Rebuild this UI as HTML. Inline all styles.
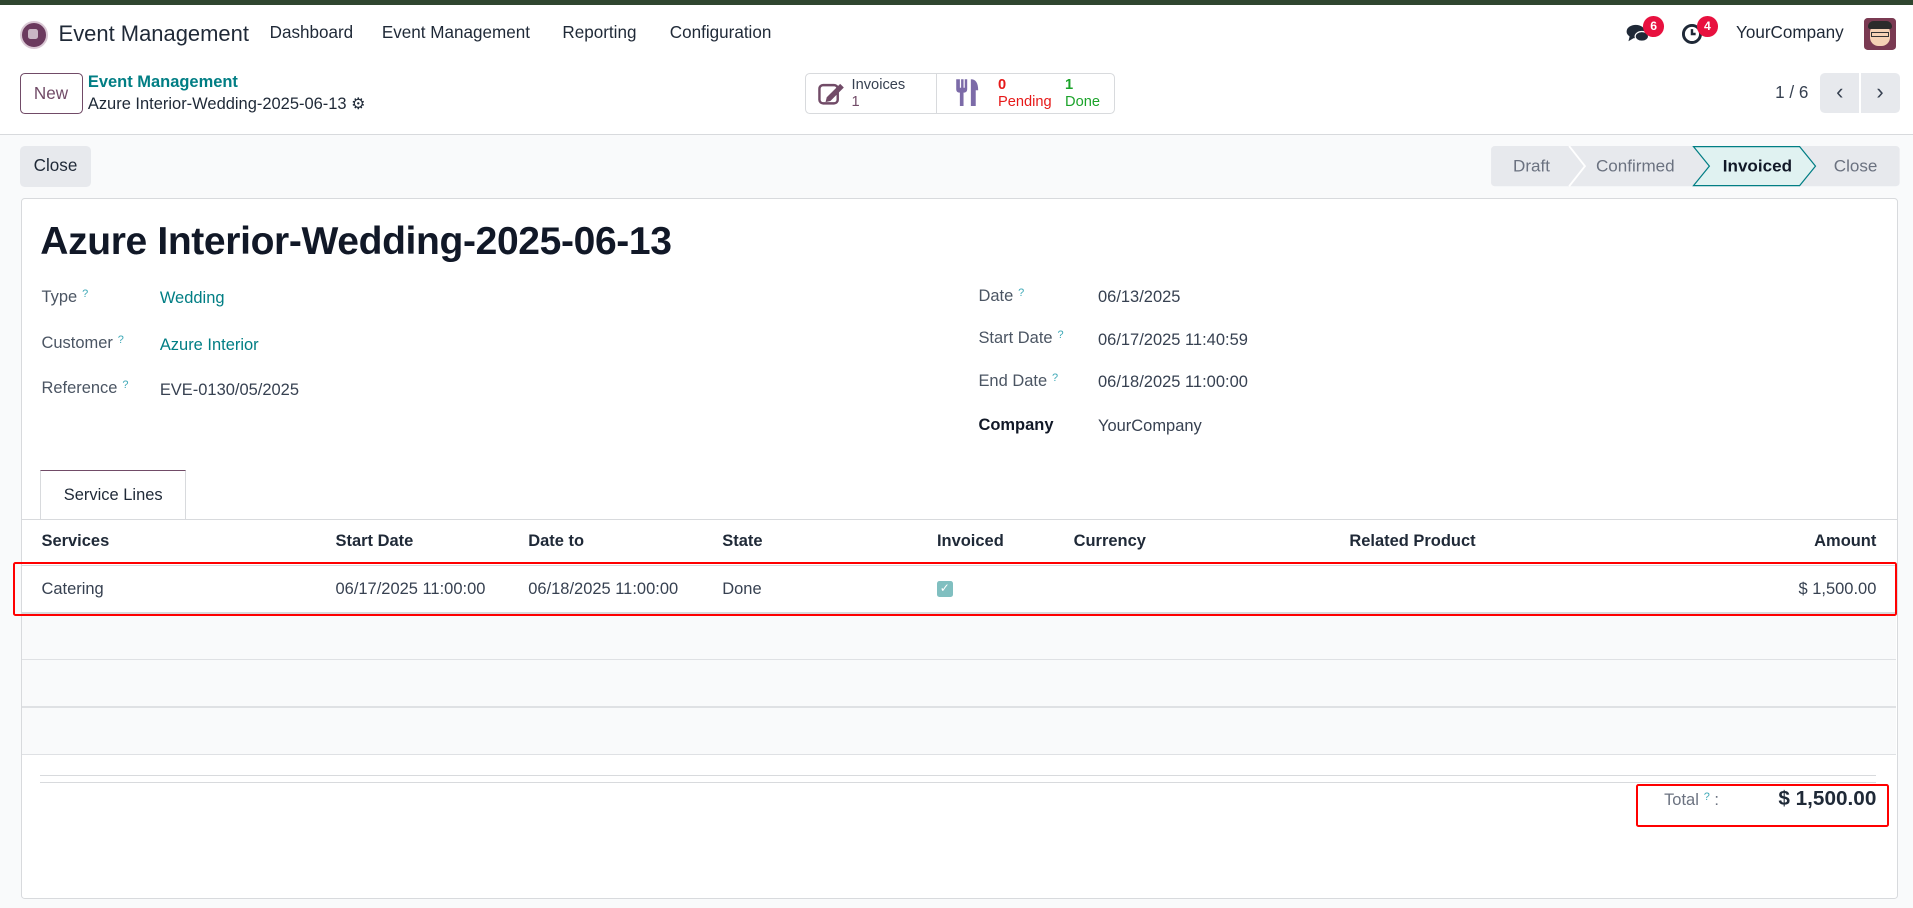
<!DOCTYPE html>
<html><head><meta charset="utf-8"><style>
html,body{margin:0;padding:0;width:1913px;height:908px;overflow:hidden;background:#f9fafb}
#w{zoom:1.22;width:1568px;height:744px;position:relative;font-family:"Liberation Sans",sans-serif;color:#374151;font-size:13px}
.a{position:absolute;white-space:nowrap}
.q{color:#3fa9b7;font-size:9px;vertical-align:top;margin-left:4px}
.lbl{color:#4b5563;font-size:13.5px}
.val{font-size:13.5px;color:#374151}
.teal{color:#017e84}
.th{font-weight:bold;color:#1f2937;font-size:13.5px}
</style></head><body><div id="w">
<div class="a" style="left:0;top:0;width:1568px;height:4px;background:#2f462f"></div>
<div class="a" style="left:0;top:4px;width:1568px;height:106px;background:#fff;border-bottom:1px solid #d8dadd"></div>
<!-- navbar -->
<div class="a" style="left:16px;top:17px;width:20px;height:20px;border-radius:50%;background:#6b3a5e;border:2px solid #d9c8d4"></div>
<div class="a" style="left:23px;top:24px;width:8px;height:8px;border-radius:2px;background:#c9b6c4"></div>
<div class="a" style="left:48px;top:17px;font-size:18px;color:#1f2937">Event Management</div>
<div class="a" style="left:221px;top:19px;font-size:14px;color:#1f2937">Dashboard</div>
<div class="a" style="left:313px;top:19px;font-size:14px;color:#1f2937">Event Management</div>
<div class="a" style="left:461px;top:19px;font-size:14px;color:#1f2937">Reporting</div>
<div class="a" style="left:549px;top:19px;font-size:14px;color:#1f2937">Configuration</div>
<svg class="a" style="left:1333px;top:19px" width="20" height="18" viewBox="0 0 20 18"><ellipse cx="8" cy="7" rx="7.5" ry="5.5" fill="#1f2937"/><path d="M3 11 L2 15 L7 12Z" fill="#1f2937"/><ellipse cx="13" cy="11" rx="5.5" ry="4" fill="#1f2937" stroke="#fff" stroke-width="1"/></svg>
<div class="a" style="left:1347px;top:13px;width:17px;height:17px;border-radius:50%;background:#e8113f;color:#fff;font-size:10px;font-weight:bold;text-align:center;line-height:17px">6</div>
<svg class="a" style="left:1378px;top:19px" width="18" height="18" viewBox="0 0 18 18"><circle cx="9" cy="9" r="7" fill="none" stroke="#1f2937" stroke-width="2.4"/><path d="M9 5v4h3" stroke="#1f2937" stroke-width="2" fill="none"/></svg>
<div class="a" style="left:1391px;top:13px;width:17px;height:17px;border-radius:50%;background:#e8113f;color:#fff;font-size:10px;font-weight:bold;text-align:center;line-height:17px">4</div>
<div class="a" style="left:1423px;top:19px;font-size:14px;color:#1f2937">YourCompany</div>
<div class="a" style="left:1528px;top:15px;width:26px;height:26px;border-radius:3px;background:#7a3a52;overflow:hidden"><div style="position:absolute;left:5px;top:5px;width:16px;height:18px;border-radius:7px;background:#f5d2b5"></div><div style="position:absolute;left:3px;top:2px;width:20px;height:7px;border-radius:5px 5px 2px 2px;background:#2b2b2b"></div><div style="position:absolute;left:6px;top:11px;width:14px;height:4px;border:1px solid #333;box-sizing:border-box"></div></div>
<!-- control panel -->
<div class="a" style="left:16px;top:60px;width:50px;height:32px;border:1px solid #714b67;border-radius:4px;color:#714b67;font-size:14px;text-align:center;line-height:32px">New</div>
<div class="a teal" style="left:72px;top:60px;font-size:13.5px;font-weight:bold">Event Management</div>
<div class="a" style="left:72px;top:77px;font-size:13.5px;color:#1f2937">Azure Interior-Wedding-2025-06-13 <span style="font-size:13px">⚙</span></div>
<div class="a" style="left:660px;top:60px;width:252px;height:32px;border:1px solid #d8dadd;border-radius:4px;background:#fff"></div>
<div class="a" style="left:767px;top:61px;width:1px;height:32px;background:#d8dadd"></div>
<svg class="a" style="left:670px;top:65px" width="24" height="22" viewBox="0 0 24 22"><rect x="2" y="5" width="15" height="15" rx="3" fill="none" stroke="#714b67" stroke-width="2"/><path d="M8 15 L19 4 L22 7 L11 18 L7 19Z" fill="#714b67"/></svg>
<div class="a" style="left:698px;top:63px;font-size:12px;color:#374151;line-height:14px">Invoices<br><span style="color:#714b67">1</span></div>
<svg class="a" style="left:783px;top:64px" width="22" height="24" viewBox="0 0 22 24"><path d="M1 1v8c0 2 1 3 3 3v11h3V12c2 0 3-1 3-3V1H8v7H7V1H5v7H4V1Z" fill="#7c6ba8"/><path d="M13 1c4 0 6 3 6 9h-2v13h-4Z" fill="#7c6ba8"/></svg>
<div class="a" style="left:818px;top:63px;font-size:12px;color:#e61919;line-height:14px"><b>0</b><br>Pending</div>
<div class="a" style="left:873px;top:63px;font-size:12px;color:#1ba32a;line-height:14px"><b>1</b><br>Done</div>
<div class="a" style="left:1455px;top:68px;font-size:14px;color:#374151">1 / 6</div>
<div class="a" style="left:1492px;top:60px;width:32px;height:33px;background:#e7e9ed;border-radius:4px 0 0 4px;text-align:center;line-height:31px;font-size:18px;color:#374151">&#8249;</div>
<div class="a" style="left:1525px;top:60px;width:32px;height:33px;background:#e7e9ed;border-radius:0 4px 4px 0;text-align:center;line-height:31px;font-size:18px;color:#374151">&#8250;</div>
<!-- status row -->
<div class="a" style="left:16px;top:120px;width:59px;height:33px;background:#e7e9ed;border-radius:4px;text-align:center;line-height:33px;font-size:14px;color:#1f2937">Close</div>
<svg class="a" style="left:1222px;top:120px" width="335" height="34" viewBox="0 0 335 34">
<rect x="0" y="0" width="335" height="33" rx="3" fill="#e7e9ed"/>
<path d="M64 0 L77 16.5 L64 33" fill="none" stroke="#fff" stroke-width="1.5"/>
<path d="M166 0.5 L253 0.5 L266 16.5 L253 32.5 L166 32.5 L179 16.5Z" fill="#e0f2f1" stroke="#017e84" stroke-width="1"/>
<text x="18" y="21" font-family="Liberation Sans" font-size="14" fill="#6b7280">Draft</text>
<text x="86" y="21" font-family="Liberation Sans" font-size="14" fill="#6b7280">Confirmed</text>
<text x="190" y="21" font-family="Liberation Sans" font-size="14" font-weight="bold" fill="#111827">Invoiced</text>
<text x="281" y="21" font-family="Liberation Sans" font-size="14" fill="#6b7280">Close</text>
</svg>
<!-- sheet -->
<div class="a" style="left:17px;top:162px;width:1537px;height:573px;background:#fff;border:1px solid #d8dadd;border-radius:3px"></div>
<div class="a" style="left:33px;top:180px;font-size:32px;font-weight:bold;color:#111827;letter-spacing:-0.3px">Azure Interior-Wedding-2025-06-13</div>
<div class="a lbl" style="left:34px;top:236px">Type<span class="q">?</span></div>
<div class="a val teal" style="left:131px;top:237px">Wedding</div>
<div class="a lbl" style="left:34px;top:274px">Customer<span class="q">?</span></div>
<div class="a val teal" style="left:131px;top:275px">Azure Interior</div>
<div class="a lbl" style="left:34px;top:311px">Reference<span class="q">?</span></div>
<div class="a val" style="left:131px;top:312px">EVE-0130/05/2025</div>
<div class="a lbl" style="left:802px;top:235px">Date<span class="q">?</span></div>
<div class="a val" style="left:900px;top:236px">06/13/2025</div>
<div class="a lbl" style="left:802px;top:270px">Start Date<span class="q">?</span></div>
<div class="a val" style="left:900px;top:271px">06/17/2025 11:40:59</div>
<div class="a lbl" style="left:802px;top:305px">End Date<span class="q">?</span></div>
<div class="a val" style="left:900px;top:306px">06/18/2025 11:00:00</div>
<div class="a" style="left:802px;top:341px;font-size:13.5px;font-weight:bold;color:#111827">Company</div>
<div class="a val" style="left:900px;top:342px">YourCompany</div>
<!-- tab -->
<div class="a" style="left:17px;top:425px;width:1538px;height:1px;background:#d8dadd"></div>
<div class="a" style="left:33px;top:385px;width:118px;height:40px;background:#fff;border:1px solid #d8dadd;border-top:1px solid #714b67;border-bottom:none;text-align:center;line-height:40px;font-size:13.5px;color:#1f2937">Service Lines</div>
<!-- table -->
<div class="a th" style="left:34px;top:436px">Services</div>
<div class="a th" style="left:275px;top:436px">Start Date</div>
<div class="a th" style="left:433px;top:436px">Date to</div>
<div class="a th" style="left:592px;top:436px">State</div>
<div class="a th" style="left:768px;top:436px">Invoiced</div>
<div class="a th" style="left:880px;top:436px">Currency</div>
<div class="a th" style="left:1106px;top:436px">Related Product</div>
<div class="a th" style="right:30px;top:436px">Amount</div>
<div class="a" style="left:18px;top:463px;width:1536px;height:1px;background:#d8dadd"></div>
<div class="a" style="left:18px;top:502px;width:1536px;height:117px;background:#f9fafb"></div>
<div class="a" style="left:18px;top:502px;width:1536px;height:1px;background:#d8dadd"></div>
<div class="a" style="left:18px;top:540px;width:1536px;height:1px;background:#dfe1e4"></div>
<div class="a" style="left:18px;top:579px;width:1536px;height:1px;background:#dfe1e4"></div>
<div class="a" style="left:18px;top:618px;width:1536px;height:1px;background:#dfe1e4"></div>
<div class="a val" style="left:34px;top:475px">Catering</div>
<div class="a val" style="left:275px;top:475px">06/17/2025 11:00:00</div>
<div class="a val" style="left:433px;top:475px">06/18/2025 11:00:00</div>
<div class="a val" style="left:592px;top:475px">Done</div>
<div class="a" style="left:768px;top:476px;width:13px;height:13px;background:#80bfc0;border-radius:2px;color:#fff;font-size:10px;text-align:center;line-height:13px">✓</div>
<div class="a val" style="right:30px;top:475px">$ 1,500.00</div>
<div class="a" style="left:11px;top:461px;width:1541px;height:41px;border:2px solid #f00;border-radius:2px"></div>
<!-- totals -->
<div class="a" style="left:33px;top:635px;width:1505px;height:1px;background:#d8dadd"></div>
<div class="a" style="left:33px;top:641px;width:1505px;height:1px;background:#d8dadd"></div>
<div class="a" style="left:1364px;top:648px;font-size:13.5px;color:#6b7280">Total<span class="q">?</span> :</div>
<div class="a" style="right:30px;top:645px;font-size:17px;font-weight:bold;color:#1f2937">$ 1,500.00</div>
<div class="a" style="left:1341px;top:643px;width:204px;height:32px;border:2px solid #f00;border-radius:2px"></div>
</div></body></html>
